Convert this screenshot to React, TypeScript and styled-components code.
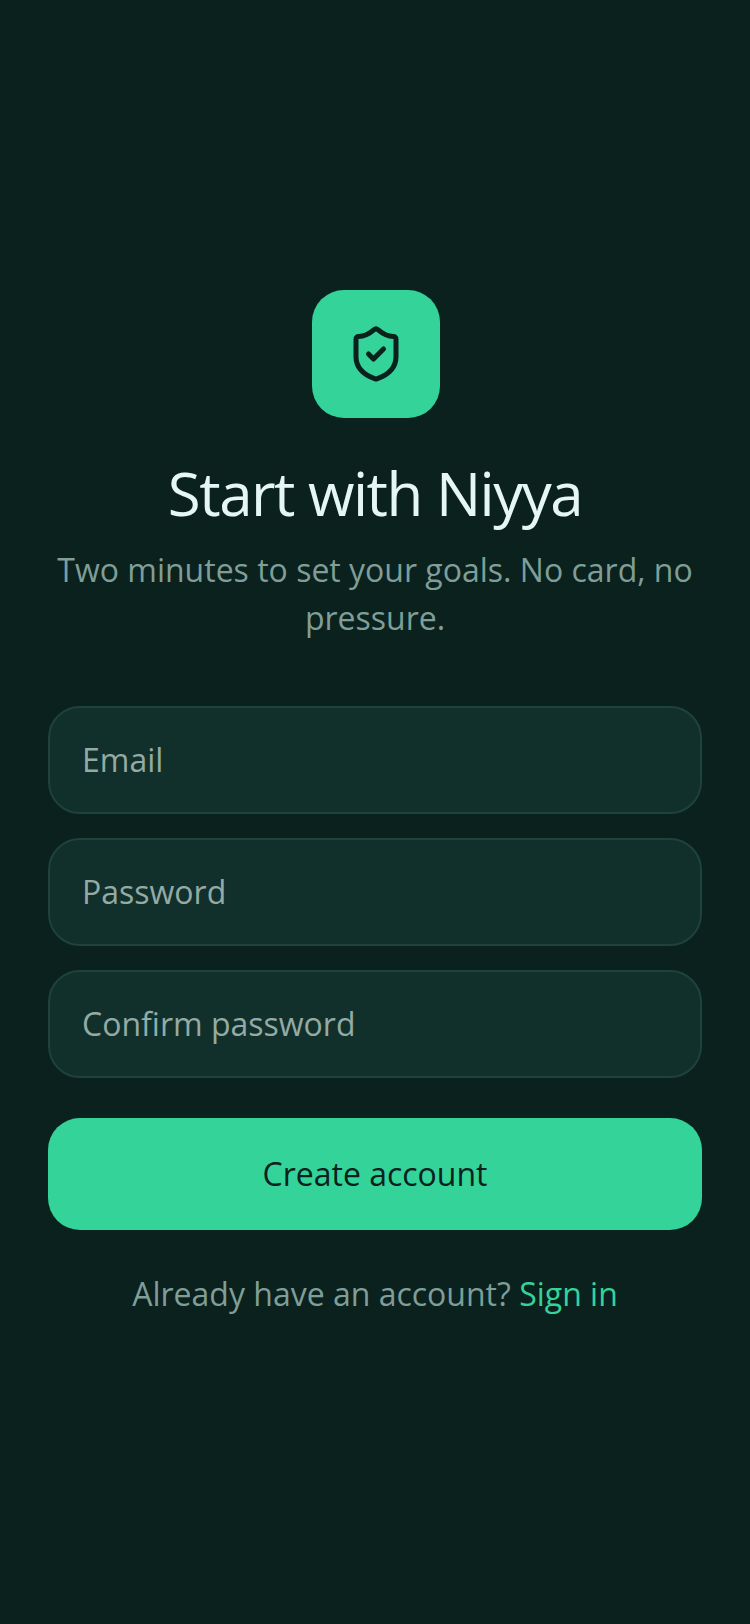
import { createGlobalStyle, styled } from 'styled-components';
import { ShieldCheck } from 'lucide-react';

const GlobalStyle = createGlobalStyle`
  html, body {
    margin: 0;
    padding: 0;
    background-color: #0b211e;
  }

  * {
    box-sizing: border-box;
  }
`;

const FIELDS = ['Email', 'Password', 'Confirm password'];

function App() {
  return (
    <StyledPage>
      <GlobalStyle />
      <StyledLogo>
        <ShieldCheck size={60} strokeWidth={2} color="#0b211e" />
      </StyledLogo>
      <StyledTitle>Start with Niyya</StyledTitle>
      <StyledSubtitle>Two minutes to set your goals. No card, no pressure.</StyledSubtitle>
      <StyledForm>
        {FIELDS.map(field => (
          <StyledInput key={field} placeholder={field} />
        ))}
        <StyledSubmit type="button">Create account</StyledSubmit>
      </StyledForm>
      <StyledFooter>
        Already have an account? <StyledLink>Sign in</StyledLink>
      </StyledFooter>
    </StyledPage>
  );
}

export default App;

const StyledPage = styled.div`
  display: flex;
  flex-direction: column;
  align-items: center;

  height: 1624px;
  padding: 290px 48px 0;

  background-color: #0b211e;

  font-family: 'Open Sans', sans-serif;
`;

const StyledLogo = styled.div`
  display: flex;
  justify-content: center;
  align-items: center;

  width: 128px;
  height: 128px;
  margin-left: 2px;

  border-radius: 32px;
  background-color: #34d399;
`;

const StyledTitle = styled.h1`
  margin: 35px 0 0;

  color: #e6f7f3;
  font-size: 60px;
  font-weight: 400;
  line-height: 80px;
  letter-spacing: -1.5px;
`;

const StyledSubtitle = styled.p`
  margin: 13px 0 0;

  color: #7f9e97;
  font-size: 32px;
  line-height: 48px;
  text-align: center;
`;

const StyledForm = styled.form`
  display: flex;
  flex-direction: column;
  gap: 24px;

  width: 100%;
  margin-top: 64px;
`;

const StyledInput = styled.input`
  width: 100%;
  height: 108px;
  padding: 0 32px 2px;

  border: 2px solid #1f423b;
  border-radius: 32px;
  outline: none;
  background-color: #12302b;

  color: #e6f7f3;
  font-family: inherit;
  font-size: 32px;

  &::placeholder {
    color: #94aaa4;
    opacity: 1;
  }
`;

const StyledSubmit = styled.button`
  width: 100%;
  height: 112px;
  margin-top: 16px;
  padding: 0 0 2px;

  border: none;
  border-radius: 32px;
  background-color: #34d399;

  color: #0b211e;
  font-family: inherit;
  font-size: 32px;
`;

const StyledFooter = styled.p`
  margin: 40px 0 0;

  color: #7f9e97;
  font-size: 32px;
  line-height: 48px;
  text-align: center;
`;

const StyledLink = styled.span`
  color: #34d399;
`;
